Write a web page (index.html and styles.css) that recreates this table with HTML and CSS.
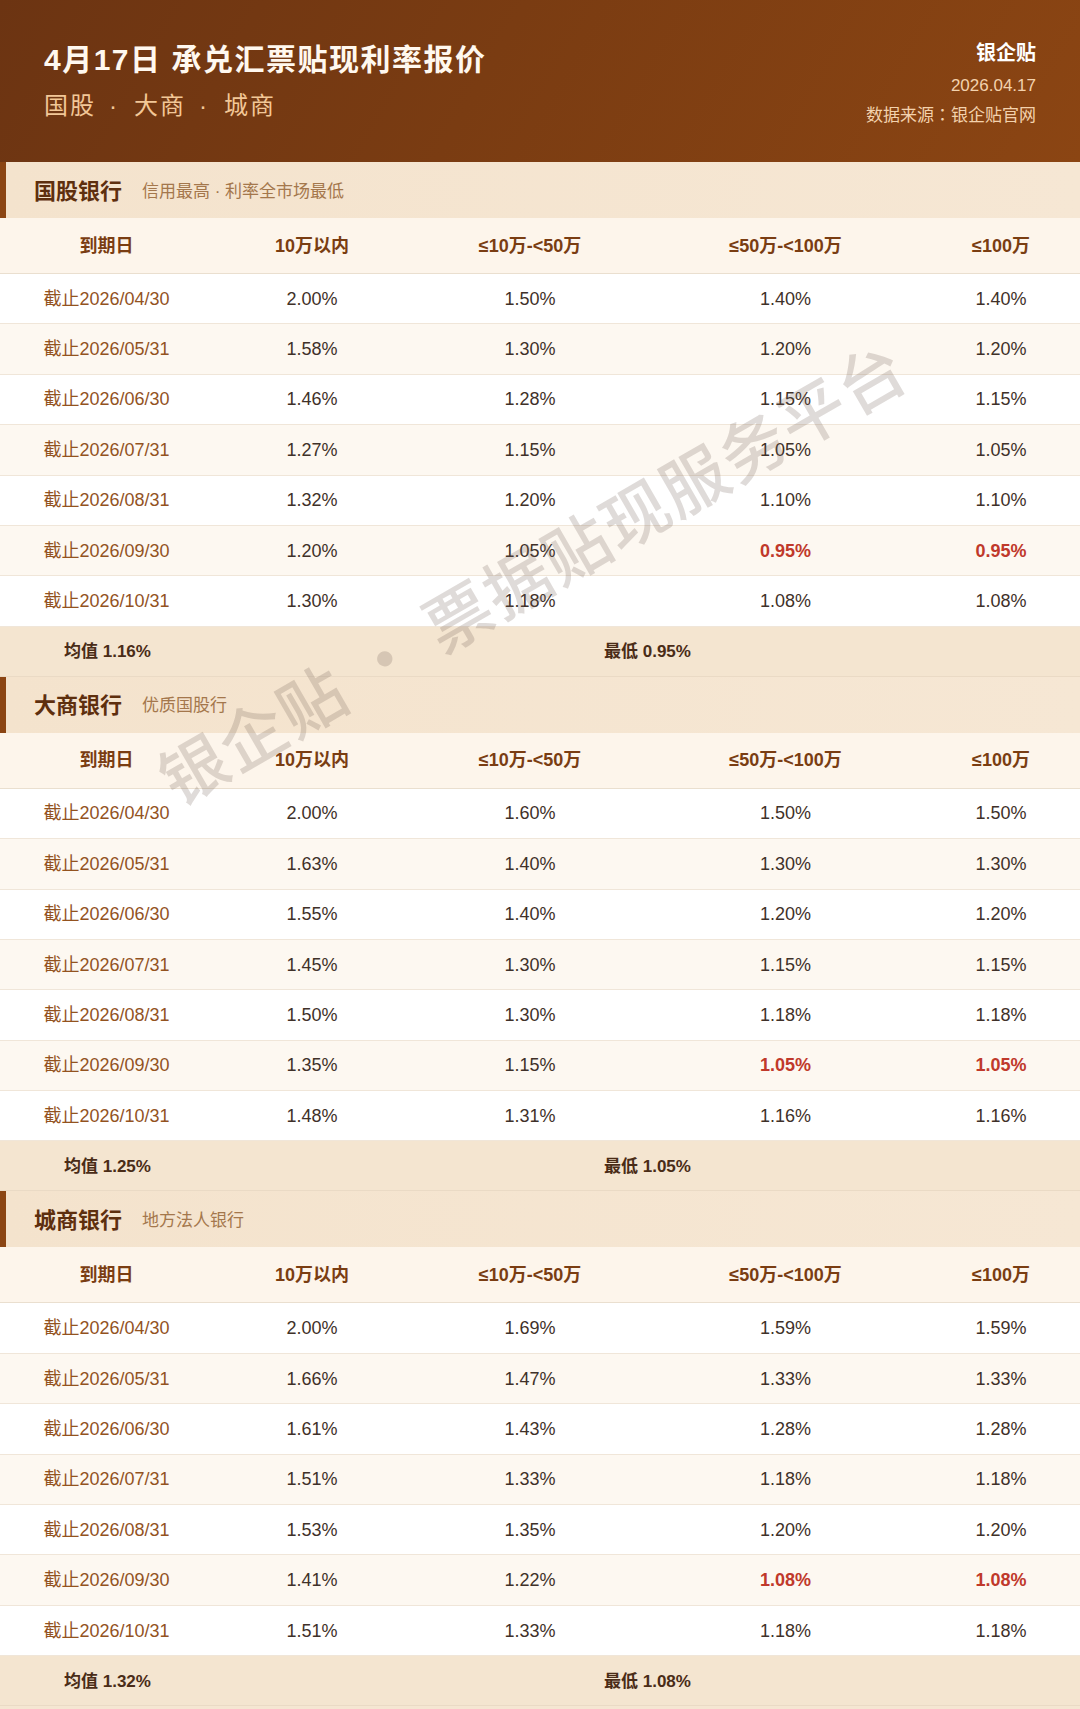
FILE: index.html
```html
<!DOCTYPE html>
<html lang="zh-CN">
<head>
<meta charset="utf-8">
<title>4月17日 承兑汇票贴现利率报价</title>
<link rel="stylesheet" href="styles.css">
</head>
<body>
<div class="page">
  <header class="hero">
    <div class="hero-left">
      <h1 class="hero-title">4月17日 承兑汇票贴现利率报价</h1>
      <div class="hero-sub">国股<span class="sep">·</span>大商<span class="sep">·</span>城商</div>
    </div>
    <div class="hero-right">
      <div class="brand">银企贴</div>
      <div class="meta">2026.04.17</div>
      <div class="meta meta-src">数据来源<span class="colon" lang="zh-TW">：</span>银企贴官网</div>
    </div>
  </header>

  <section class="bank">
    <div class="bank-head"><span class="bank-name">国股银行</span><span class="bank-desc">信用最高 · 利率全市场最低</span></div>
    <div class="row thead"><span>到期日</span><span>10万以内</span><span>≤10万-&lt;50万</span><span>≤50万-&lt;100万</span><span>≤100万</span></div>
    <div class="row"><span class="date">截止2026/04/30</span><span>2.00%</span><span>1.50%</span><span>1.40%</span><span>1.40%</span></div>
    <div class="row alt"><span class="date">截止2026/05/31</span><span>1.58%</span><span>1.30%</span><span>1.20%</span><span>1.20%</span></div>
    <div class="row"><span class="date">截止2026/06/30</span><span>1.46%</span><span>1.28%</span><span>1.15%</span><span>1.15%</span></div>
    <div class="row alt"><span class="date">截止2026/07/31</span><span>1.27%</span><span>1.15%</span><span>1.05%</span><span>1.05%</span></div>
    <div class="row"><span class="date">截止2026/08/31</span><span>1.32%</span><span>1.20%</span><span>1.10%</span><span>1.10%</span></div>
    <div class="row alt"><span class="date">截止2026/09/30</span><span>1.20%</span><span>1.05%</span><span class="low">0.95%</span><span class="low">0.95%</span></div>
    <div class="row"><span class="date">截止2026/10/31</span><span>1.30%</span><span>1.18%</span><span>1.08%</span><span>1.08%</span></div>
    <div class="summary"><span>均值 1.16%</span><span>最低 0.95%</span></div>
  </section>

  <section class="bank">
    <div class="bank-head"><span class="bank-name">大商银行</span><span class="bank-desc">优质国股行</span></div>
    <div class="row thead"><span>到期日</span><span>10万以内</span><span>≤10万-&lt;50万</span><span>≤50万-&lt;100万</span><span>≤100万</span></div>
    <div class="row"><span class="date">截止2026/04/30</span><span>2.00%</span><span>1.60%</span><span>1.50%</span><span>1.50%</span></div>
    <div class="row alt"><span class="date">截止2026/05/31</span><span>1.63%</span><span>1.40%</span><span>1.30%</span><span>1.30%</span></div>
    <div class="row"><span class="date">截止2026/06/30</span><span>1.55%</span><span>1.40%</span><span>1.20%</span><span>1.20%</span></div>
    <div class="row alt"><span class="date">截止2026/07/31</span><span>1.45%</span><span>1.30%</span><span>1.15%</span><span>1.15%</span></div>
    <div class="row"><span class="date">截止2026/08/31</span><span>1.50%</span><span>1.30%</span><span>1.18%</span><span>1.18%</span></div>
    <div class="row alt"><span class="date">截止2026/09/30</span><span>1.35%</span><span>1.15%</span><span class="low">1.05%</span><span class="low">1.05%</span></div>
    <div class="row"><span class="date">截止2026/10/31</span><span>1.48%</span><span>1.31%</span><span>1.16%</span><span>1.16%</span></div>
    <div class="summary"><span>均值 1.25%</span><span>最低 1.05%</span></div>
  </section>

  <section class="bank">
    <div class="bank-head"><span class="bank-name">城商银行</span><span class="bank-desc">地方法人银行</span></div>
    <div class="row thead"><span>到期日</span><span>10万以内</span><span>≤10万-&lt;50万</span><span>≤50万-&lt;100万</span><span>≤100万</span></div>
    <div class="row"><span class="date">截止2026/04/30</span><span>2.00%</span><span>1.69%</span><span>1.59%</span><span>1.59%</span></div>
    <div class="row alt"><span class="date">截止2026/05/31</span><span>1.66%</span><span>1.47%</span><span>1.33%</span><span>1.33%</span></div>
    <div class="row"><span class="date">截止2026/06/30</span><span>1.61%</span><span>1.43%</span><span>1.28%</span><span>1.28%</span></div>
    <div class="row alt"><span class="date">截止2026/07/31</span><span>1.51%</span><span>1.33%</span><span>1.18%</span><span>1.18%</span></div>
    <div class="row"><span class="date">截止2026/08/31</span><span>1.53%</span><span>1.35%</span><span>1.20%</span><span>1.20%</span></div>
    <div class="row alt"><span class="date">截止2026/09/30</span><span>1.41%</span><span>1.22%</span><span class="low">1.08%</span><span class="low">1.08%</span></div>
    <div class="row"><span class="date">截止2026/10/31</span><span>1.51%</span><span>1.33%</span><span>1.18%</span><span>1.18%</span></div>
    <div class="summary"><span>均值 1.32%</span><span>最低 1.08%</span></div>
  </section>

  <div class="watermark">银企贴 · 票据贴现服务平台</div>
</div>
</body>
</html>
```

FILE: styles.css
```css
* { box-sizing: border-box; margin: 0; padding: 0; }

html, body {
  background: #f5e6d2;
}

body {
  width: 1080px;
  font-family: "Liberation Sans", "Noto Sans CJK SC", sans-serif;
  color: #3d3028;
}

.page {
  position: relative;
  width: 1080px;
  overflow: hidden;
  background: #ffffff;
}

/* ---------- header ---------- */
.hero {
  height: 162px;
  padding: 39px 44px 0 44px;
  display: flex;
  justify-content: space-between;
  align-items: flex-start;
  background: linear-gradient(120deg, #6c3412 0%, #7a3c12 45%, #8b4513 100%);
}

.hero-left {
  padding-top: 1px;
}

.hero-title {
  font-size: 30px;
  line-height: 40px;
  font-weight: 700;
  letter-spacing: 1.5px;
  color: #fff8ef;
}

.hero-sub {
  margin-top: 10px;
  font-size: 24px;
  line-height: 32px;
  letter-spacing: 2px;
  color: #f2c797;
}

.sep {
  padding: 0 15px 0 13px;
}

.hero-right {
  text-align: right;
}

.brand {
  font-size: 20px;
  line-height: 28px;
  font-weight: 700;
  color: #ffffff;
}

.meta {
  margin-top: 7px;
  font-size: 17px;
  line-height: 24px;
  color: #f3d2ad;
}

.meta-src {
  margin-top: 4px;
}

.colon {
  font-family: "Noto Sans CJK TC", sans-serif;
}

/* ---------- bank section ---------- */
.bank-head {
  height: 56px;
  display: flex;
  align-items: center;
  padding: 3px 0 0 28px;
  border-left: 6px solid #8b4513;
  background: linear-gradient(90deg, #f4e3cd 0%, #f6e7d4 100%);
  line-height: 30px;
}

.bank-name {
  font-size: 22px;
  font-weight: 700;
  color: #5e2f0e;
}

.bank-desc {
  margin-left: 20px;
  font-size: 17px;
  color: #a4774c;
}

.row {
  display: grid;
  grid-template-columns: 213px 198px 238px 273px 1fr;
  align-items: center;
  height: 50.4px;
  border-bottom: 1px solid #f0e6d9;
  background: #ffffff;
  font-size: 18px;
  line-height: 24px;
  text-align: center;
  color: #3f3129;
}

.row.alt {
  background: #fdf8f1;
}

.row.thead {
  height: 56px;
  background: #fdf5eb;
  border-bottom: 1px solid #eadfcf;
  font-weight: 700;
  color: #7a3d12;
}

.date {
  color: #93531f;
}

.low {
  color: #c0392b;
  font-weight: 700;
}

.summary {
  display: grid;
  grid-template-columns: 1fr 1fr;
  align-items: center;
  height: 50px;
  padding-top: 2px;
  background: #f4e5d0;
  border-bottom: 1px solid #eadac5;
  font-size: 17px;
  line-height: 24px;
  font-weight: 700;
  color: #4a2c17;
}

.summary span {
  padding-left: 64px;
}

/* ---------- watermark ---------- */
.watermark {
  position: absolute;
  left: 531px;
  top: 570px;
  transform: translate(-50%, -50%) rotate(-30deg);
  font-family: "Noto Sans CJK SC", sans-serif;
  font-size: 66px;
  font-weight: 500;
  line-height: 1;
  letter-spacing: 2px;
  white-space: nowrap;
  color: rgba(110, 90, 80, 0.22);
  pointer-events: none;
}
```
